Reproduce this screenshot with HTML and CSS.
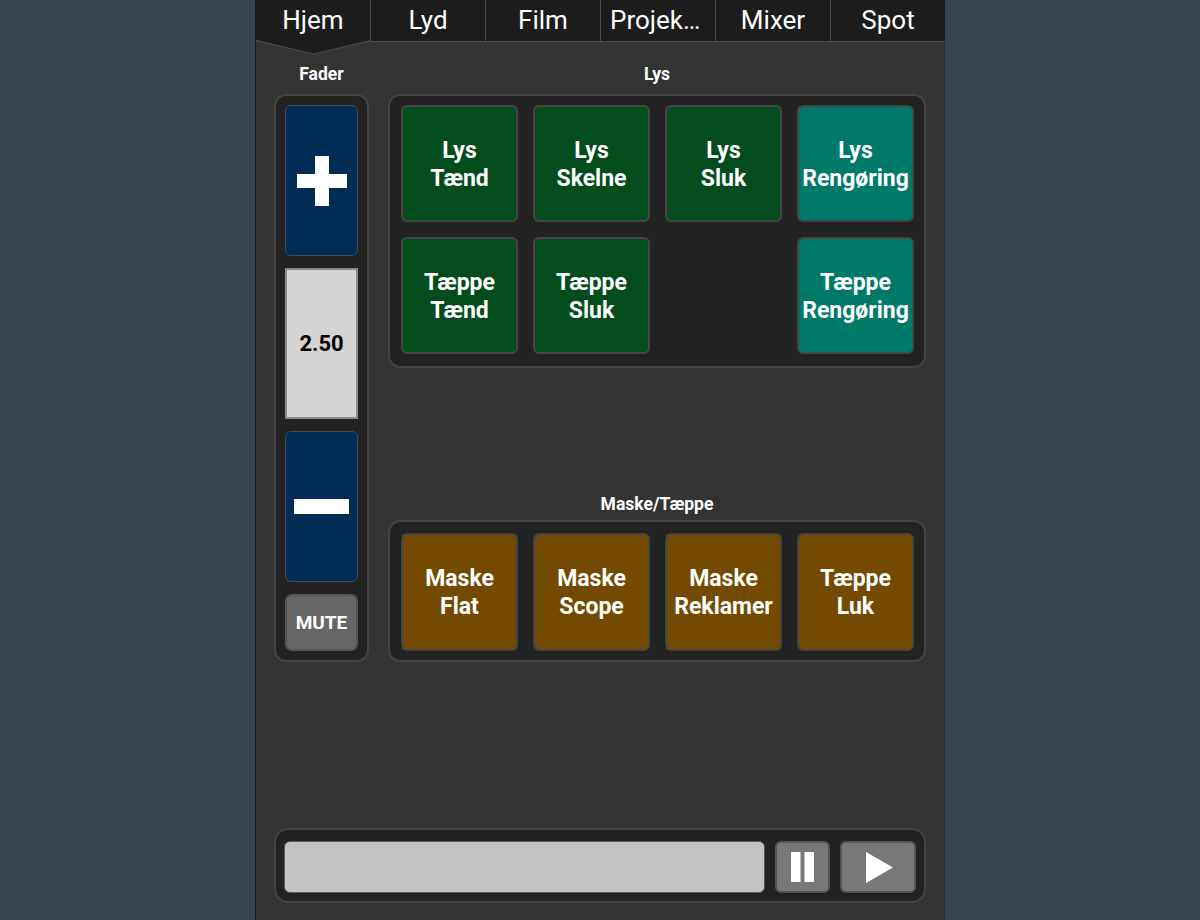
FILE: index.html
```html
<!DOCTYPE html>
<html lang="da">
<head>
<meta charset="utf-8">
<title>Hjem</title>
<link rel="stylesheet" href="styles.css">
</head>
<body>
<div class="panel">
  <nav class="tabs">
    <div class="tab active">Hjem
      <svg class="notch" width="115" height="16" viewBox="0 0 115 16"><polygon points="0,0 115,0 57.5,14" fill="#1c1c1c"/><polyline points="0,0.5 57.5,14 115,0.5" fill="none" stroke="#4a4a4a" stroke-width="1.2"/></svg>
    </div>
    <div class="tab">Lyd</div>
    <div class="tab">Film</div>
    <div class="tab">Projektor</div>
    <div class="tab">Mixer</div>
    <div class="tab">Spot</div>
  </nav>

  <main class="content">
    <section class="col-left">
      <h2 class="label">Fader</h2>
      <div class="group fader">
        <button class="fbtn">
          <svg width="50" height="50" viewBox="0 0 50 50"><rect x="18" y="0" width="14" height="50" fill="#fff"/><rect x="0" y="18" width="50" height="14" fill="#fff"/></svg>
        </button>
        <div class="value">2.50</div>
        <button class="fbtn">
          <svg width="55" height="15" viewBox="0 0 55 15"><rect x="0" y="0" width="55" height="15" fill="#fff"/></svg>
        </button>
        <button class="mute">MUTE</button>
      </div>
    </section>

    <section class="col-right">
      <h2 class="label">Lys</h2>
      <div class="group grid lys">
        <button class="btn green">Lys<br>Tænd</button>
        <button class="btn green">Lys<br>Skelne</button>
        <button class="btn green">Lys<br>Sluk</button>
        <button class="btn teal">Lys<br>Rengøring</button>
        <button class="btn green">Tæppe<br>Tænd</button>
        <button class="btn green">Tæppe<br>Sluk</button>
        <div class="empty"></div>
        <button class="btn teal">Tæppe<br>Rengøring</button>
      </div>

      <h2 class="label label-maske">Maske/Tæppe</h2>
      <div class="group grid maske">
        <button class="btn brown">Maske<br>Flat</button>
        <button class="btn brown">Maske<br>Scope</button>
        <button class="btn brown">Maske<br>Reklamer</button>
        <button class="btn brown">Tæppe<br>Luk</button>
      </div>
    </section>
  </main>

  <footer class="transport">
    <div class="progress"></div>
    <button class="tbtn pause">
      <svg width="24" height="30" viewBox="0 0 24 30"><rect x="0" y="0" width="9.5" height="30" fill="#fff"/><rect x="13.5" y="0" width="9.5" height="30" fill="#fff"/></svg>
    </button>
    <button class="tbtn play">
      <svg width="27" height="31" viewBox="0 0 27 31"><polygon points="0,0 27,15.5 0,31" fill="#fff"/></svg>
    </button>
  </footer>
</div>
</body>
</html>
```

FILE: styles.css
```css
* { box-sizing: border-box; }

html, body {
  margin: 0;
  padding: 0;
  height: 100%;
}

body {
  background: #3a4552;
  font-family: Roboto, "Liberation Sans", sans-serif;
  color: #fff;
}

.panel {
  width: 690px;
  height: 920px;
  margin: 0 auto;
  background: #333333;
  border-left: 1px solid #1a1a1a;
  display: flex;
  flex-direction: column;
}

/* tabs */
.tabs {
  display: flex;
  height: 42px;
  background: #1c1c1c;
  border-bottom: 1px solid #4a4a4a;
  position: relative;
  z-index: 2;
}

.tab {
  position: relative;
  width: 115px;
  flex: none;
  height: 41px;
  line-height: 41px;
  font-size: 26px;
  text-align: center;
  padding: 0 9px;
  white-space: nowrap;
  overflow: hidden;
  text-overflow: ellipsis;
  border-left: 1px solid #4a4a4a;
}

.tab:first-child { border-left: none; width: 114px; }

.tab.active { overflow: visible; }

.notch {
  position: absolute;
  left: 0;
  top: 40px;
  display: block;
}

/* content */
.content {
  flex: 1;
  display: flex;
  gap: 19px;
  padding: 0 19px 0 18px;
}

.col-left { width: 95px; flex: none; }
.col-right { flex: 1; }

.label {
  margin: 0;
  padding-top: 22px;
  padding-bottom: 10px;
  font-size: 17.5px;
  line-height: 20px;
  font-weight: 700;
  text-align: center;
}

.label-maske {
  padding-top: 126px;
  padding-bottom: 6px;
}

.group {
  background: #222222;
  border: 2px solid #424242;
  border-radius: 12px;
}

/* fader */
.fader {
  display: flex;
  flex-direction: column;
  gap: 12px;
  padding: 9px;
}

.fbtn {
  height: 151px;
  background: #012c55;
  border: 1px solid #3c4a5a;
  border-radius: 6px;
  display: flex;
  align-items: center;
  justify-content: center;
  padding: 0;
}

.value {
  height: 151px;
  background: #d4d4d4;
  border: 2px solid #8a8a8a;
  color: #000;
  font-size: 22px;
  font-weight: 700;
  display: flex;
  align-items: center;
  justify-content: center;
}

.mute {
  height: 57px;
  background: #666666;
  border: 2px solid #555;
  border-radius: 7px;
  color: #fff;
  font-family: Roboto, "Liberation Sans", sans-serif;
  font-size: 19px;
  font-weight: 700;
  padding: 0;
}

/* button grids */
.grid {
  display: grid;
  grid-template-columns: repeat(4, 1fr);
  column-gap: 15px;
  row-gap: 15px;
}

.lys {
  grid-auto-rows: 117px;
  padding: 9px 10px 12px 11px;
}

.maske {
  grid-auto-rows: 118px;
  padding: 11px 10px 9px 11px;
}

.btn {
  border: 2px solid #444;
  border-radius: 6px;
  color: #fff;
  font-family: Roboto, "Liberation Sans", sans-serif;
  font-size: 23px;
  font-weight: 700;
  line-height: 28px;
  padding: 2px 0 0;
  text-align: center;
}

.green { background: #034c1e; }
.teal { background: #007a68; }
.brown { background: #734a00; }

/* transport */
.transport {
  margin: 0 19px 17px 18px;
  height: 75px;
  background: #222222;
  border: 2px solid #424242;
  border-radius: 14px;
  display: flex;
  gap: 10px;
  padding: 11px 8px 8px 8px;
}

.progress {
  flex: 1;
  background: #c3c3c3;
  border: 1px solid #5a5a5a;
  border-radius: 6px;
}

.tbtn {
  background: #787878;
  border: 2px solid #555;
  border-radius: 6px;
  display: flex;
  align-items: center;
  justify-content: center;
  padding: 0;
}

.pause { width: 55px; }
.play { width: 76px; }
.play svg { margin-left: 2px; }
```
